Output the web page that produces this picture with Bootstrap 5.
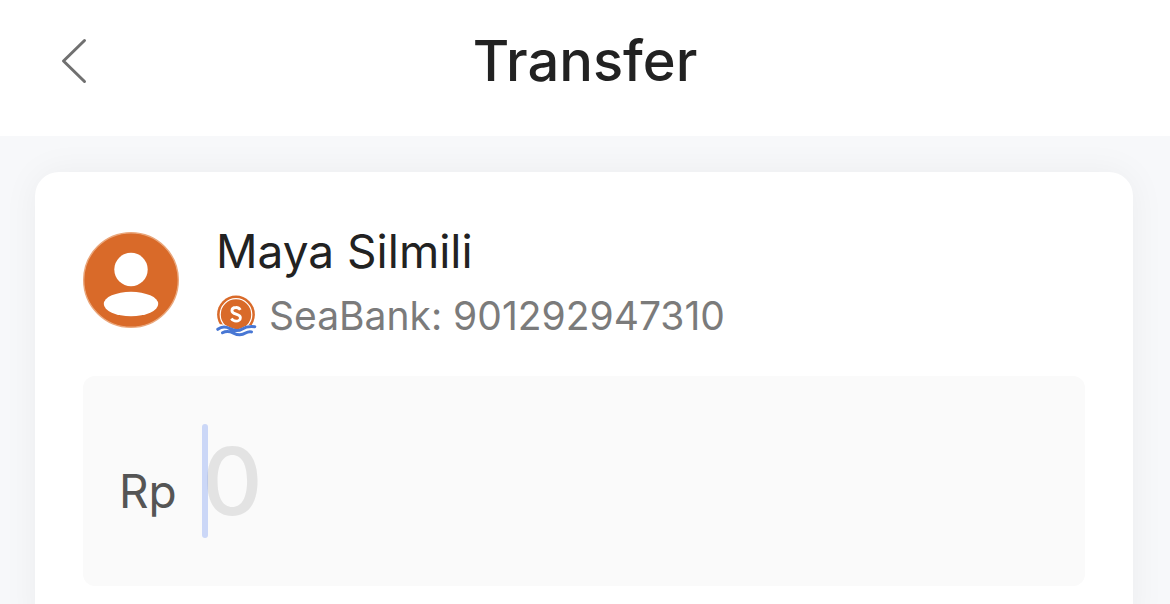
<!DOCTYPE html>
<html lang="id">
<head>
<meta charset="utf-8">
<meta name="viewport" content="width=device-width, initial-scale=1">
<title>Transfer</title>
<link href="https://cdn.jsdelivr.net/npm/bootstrap@5.3.0/dist/css/bootstrap.min.css" rel="stylesheet">
<style>
  body { font-family: Inter, "Liberation Sans", sans-serif; background: #f7f8fa; color: #222; overflow-x: hidden; }
  .topbar { display: grid; grid-template-columns: 148px 1fr 148px; height: 136px; padding-bottom: 14px; }
  .back-btn { padding: 0 0 0 60px; border: 0; background: none; line-height: 0; text-align: left; }
  .page-title { font-size: 56px; line-height: 72px; font-weight: 500; }
  .page-body { padding: 36px 37px 0 35px; }
  .transfer-card { border: 0; border-radius: 24px; padding: 52px 48px 48px; box-shadow: 0 0 36px rgba(0, 0, 0, .05); }
  .recipient { gap: 37px; margin-bottom: 36px; }
  .recipient-name { font-size: 46px; line-height: 54px; }
  .recipient-bank { font-size: 39px; line-height: 48px; color: #7b7b7b; gap: 12px; margin-top: 14px; }
  .amount-box { background: #fafafa; border-radius: 12px; height: 210px; padding: 48px 36px; }
  .currency { font-size: 46px; line-height: 54px; color: #555; width: 83px; padding-top: 40px; }
  .amount-input, .amount-input:focus { font-size: 94px; font-weight: 500; line-height: 114px; height: 114px; padding: 0; border: 0; background: transparent; box-shadow: none; caret-color: transparent; }
  .amount-input::placeholder { color: #e3e3e3; opacity: 1; }
  .cursor-bar { position: absolute; left: 0; top: 0; width: 6px; height: 114px; border-radius: 3px; background: rgba(82, 126, 240, .28); pointer-events: none; }
</style>
</head>
<body>
<header class="topbar bg-white align-items-center">
  <button type="button" class="back-btn" aria-label="Kembali">
    <svg width="28" height="46" viewBox="0 0 28 46" fill="none" stroke="#707070" stroke-width="3" stroke-linecap="round" stroke-linejoin="round"><path d="M24.500 2.500 3.500 23l21 20.500"/></svg>
  </button>
  <h1 class="page-title text-center m-0">Transfer</h1>
</header>
<main class="page-body">
  <section class="card transfer-card">
    <div class="recipient d-flex">
      <svg class="flex-shrink-0 mt-2" width="96" height="96" viewBox="0 0 96 96" aria-hidden="true">
        <circle cx="48" cy="48" r="47.300" fill="#d96a29" stroke="#eaa77c" stroke-width="1.400"/>
        <circle cx="48" cy="37.500" r="16.700" fill="#fff"/>
        <ellipse cx="48" cy="72" rx="27.200" ry="12.200" fill="#fff"/>
      </svg>
      <div>
        <div class="recipient-name">Maya Silmili</div>
        <div class="recipient-bank d-flex align-items-center">
          <svg class="flex-shrink-0" width="41" height="42" viewBox="0 0 41 42" aria-hidden="true">
            <circle cx="20" cy="19.500" r="18.900" fill="#d96a29"/>
            <circle cx="20" cy="19.500" r="15.800" fill="none" stroke="#fff" stroke-width="1.200"/>
            <path d="M24.300 14.900C23.300 13.200 21.700 12.400 19.900 12.500c-2.300 0-4 1.300-4 3.200 0 4.500 8.500 2.400 8.500 7 0 2.100-1.900 3.400-4.300 3.400-2 0-3.700-.9-4.700-2.500" fill="none" stroke="#fff" stroke-width="2.800"/>
            <path d="M-1 31c5-3 9-2 13 .3 5 2.700 10 4.200 14 1.500 4-2.600 8-3 15-3V46H-1z" fill="#fff"/>
            <path d="M1.800 34.300c4-3 8-2.700 12-.7 4.500 2.400 8.500 3 12.500.3 4-2.700 8-2.700 12.500-2.200M6.500 37.800c4-2.200 7-1.700 11 .3 4.500 2.300 8 2.500 12 0 2.300-1.500 4-1.700 6-1.200" fill="none" stroke="#4877d4" stroke-width="3" stroke-linecap="round"/>
          </svg>
          <span>SeaBank: 901292947310</span>
        </div>
      </div>
    </div>
    <div class="amount-box d-flex">
      <label class="currency flex-shrink-0" for="amount">Rp</label>
      <div class="position-relative flex-grow-1">
        <input id="amount" class="form-control amount-input" type="text" inputmode="numeric" placeholder="0">
        <span class="cursor-bar"></span>
      </div>
    </div>
  </section>
</main>
<script src="https://cdn.jsdelivr.net/npm/bootstrap@5.3.0/dist/js/bootstrap.bundle.min.js"></script>
</body>
</html>
